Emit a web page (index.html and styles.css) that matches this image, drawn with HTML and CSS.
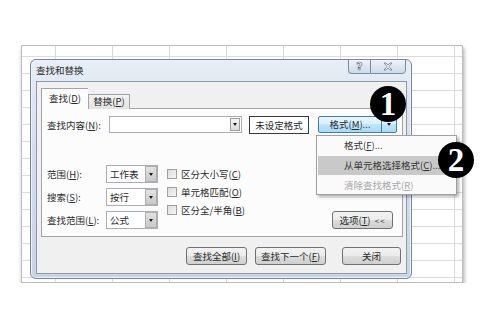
FILE: index.html
```html
<!DOCTYPE html>
<html lang="zh-CN">
<head>
    <meta charset="UTF-8">
    <title>查找和替换</title>
    <link rel="stylesheet" href="styles.css">
</head>
<body>
    <div class="sheet">
        <div class="dialog">
            <div class="titlebar">
                <span class="title">查找和替换</span>
                <div class="caption-btns">
                    <span class="cap help">?</span>
                    <span class="cap close">
                        <svg width="10" height="9" viewBox="0 0 10 9">
                            <path d="M1 1 L3 1 L5 3 L7 1 L9 1 L6 4.5 L9 8 L7 8 L5 6 L3 8 L1 8 L4 4.5 Z" fill="#f4f6f9" stroke="#6b7a8c" stroke-width="0.8"/>
                        </svg>
                    </span>
                </div>
            </div>
            <div class="client">
                <div class="tabs">
                    <span class="tab active">查找(<u>D</u>)</span>
                    <span class="tab">替换(<u>P</u>)</span>
                </div>
                <div class="panel">
                    <div class="find-row">
                        <span class="find-label">查找内容(<u>N</u>):</span>
                        <div class="combo"><span class="drop"></span></div>
                        <span class="btn-plain">未设定格式</span>
                        <div class="split">
                            <span class="split-main">格式(<u>M</u>)...</span>
                            <span class="split-arrow"></span>
                        </div>
                    </div>
                    <div class="options">
                        <div class="selects">
                            <div class="opt-row">
                                <span class="opt-label">范围(<u>H</u>):</span>
                                <div class="select">工作表<span class="drop grey"></span></div>
                            </div>
                            <div class="opt-row">
                                <span class="opt-label">搜索(<u>S</u>):</span>
                                <div class="select">按行<span class="drop grey"></span></div>
                            </div>
                            <div class="opt-row">
                                <span class="opt-label">查找范围(<u>L</u>):</span>
                                <div class="select">公式<span class="drop grey"></span></div>
                            </div>
                        </div>
                        <div class="checks">
                            <div class="check"><span class="box"></span>区分大小写(<u>C</u>)</div>
                            <div class="check"><span class="box"></span>单元格匹配(<u>O</u>)</div>
                            <div class="check"><span class="box"></span>区分全/半角(<u>B</u>)</div>
                        </div>
                        <span class="btn opt-btn">选项(<u>T</u>) <span class="chev">&lt;&lt;</span></span>
                    </div>
                </div>
                <div class="actions">
                    <span class="btn w-all">查找全部(<u>I</u>)</span>
                    <span class="btn w-next">查找下一个(<u>F</u>)</span>
                    <span class="btn w-close">关闭</span>
                </div>
            </div>
        </div>

        <div class="menu">
            <div class="menu-item">格式(<u>F</u>)...</div>
            <div class="menu-item hover">从单元格选择格式(<u>C</u>)...</div>
            <div class="menu-item disabled">清除查找格式(<u>R</u>)</div>
        </div>

        <div class="badge badge-1">1</div>
        <div class="badge badge-2">2</div>
    </div>
</body>
</html>
```

FILE: styles.css
```css
* {
    box-sizing: border-box;
}
body {
    margin: 0;
    background: #fff;
    font-family: "Noto Sans CJK SC", "Noto Sans", sans-serif;
    font-size: 9.5px;
    color: #2a2a2a;
}
u {
    text-decoration: underline;
    text-underline-offset: 1px;
}
.sheet {
    position: relative;
    margin: 45px 0 0 21px;
    width: 442px;
    height: 238px;
    border: 1px solid #bdbdbd;
    background-color: #fff;
    background-image:
        linear-gradient(to right, #d8d8d8 1px, transparent 1px),
        linear-gradient(to bottom, #dcdcdc 1px, transparent 1px);
    background-size: 57px 100%, 100% 17px;
    background-position: 33px 0, 0 10px;
    box-shadow: 1px 3px 4px rgba(0, 0, 0, 0.35);
}

/* dialog window */
.dialog {
    position: absolute;
    left: 8px;
    top: 13px;
    width: 382px;
    height: 220px;
    display: flex;
    flex-direction: column;
    border: 1px solid #74849a;
    border-radius: 6px;
    background: linear-gradient(180deg, #e6edf5 0%, #d3dfeb 40%, #c7d5e4 100%);
    box-shadow: inset 0 0 0 1px #eef3f8;
}
.titlebar {
    height: 21px;
    display: flex;
    justify-content: space-between;
    align-items: flex-start;
    padding-left: 5px;
}
.title {
    line-height: 20px;
}
.caption-btns {
    display: flex;
    margin-right: 5px;
    margin-top: -1px;
}
.cap {
    height: 15px;
    display: flex;
    align-items: center;
    justify-content: center;
    border: 1px solid #7c8ba0;
    background: linear-gradient(180deg, #eef3f8 0%, #dde6f0 50%, #cfdbe8 100%);
}
.help {
    width: 22px;
    border-radius: 0 0 0 4px;
    border-right: none;
    color: #fafcfd;
    font-family: "DejaVu Sans", sans-serif;
    font-weight: bold;
    font-size: 11px;
    -webkit-text-stroke: 0.7px #6b7a8c;
}
.close {
    width: 36px;
    border-radius: 0 0 4px 0;
}
.client {
    flex: 1;
    margin: 0 4px 4px 5px;
    border: 1px solid #8c9aad;
    background: #f0f0f0;
    display: flex;
    flex-direction: column;
}

/* tabs */
.tabs {
    display: flex;
    align-items: flex-end;
    padding: 6px 0 0 4px;
    height: 27px;
    margin-bottom: -1px;
    position: relative;
    z-index: 1;
}
.tab {
    width: 42px;
    height: 15px;
    line-height: 13px;
    text-align: center;
    border: 1px solid #a3a3a3;
    border-bottom: none;
    background: linear-gradient(180deg, #f3f3f3, #e2e2e2);
}
.tab.active {
    width: 47px;
    height: 21px;
    line-height: 19px;
    background: #fcfcfc;
    border-right: none;
}
.panel {
    height: 129px;
    margin: 0 3px 0 4px;
    border: 1px solid #a3a3a3;
    background: #fcfcfc;
    display: flex;
    flex-direction: column;
}
.find-row {
    display: flex;
    align-items: center;
    margin-top: 6px;
    padding-left: 5px;
    height: 19px;
}
.find-label {
    width: 62px;
}
.combo {
    width: 133px;
    height: 17px;
    border: 1px solid #abadb3;
    background: #fff;
    display: flex;
    justify-content: flex-end;
    padding: 1px;
}
.drop {
    width: 10px;
    border: 1px solid #9c9c9c;
    background: linear-gradient(180deg, #f4f4f4, #dcdcdc);
    display: flex;
    align-items: center;
    justify-content: center;
}
.drop::after {
    content: "";
    border-left: 2.5px solid transparent;
    border-right: 2.5px solid transparent;
    border-top: 3px solid #1a1a1a;
}
.drop.grey {
    width: 12px;
    border-color: #b0b0b0;
    background: linear-gradient(180deg, #e2e2e2, #c9c9c9);
}
.btn-plain {
    margin-left: 7px;
    width: 60px;
    height: 18px;
    line-height: 16px;
    text-align: center;
    border: 1px solid #3a3a3a;
    background: #fff;
}
.split {
    margin-left: 9px;
    width: 79px;
    height: 17px;
    display: flex;
    border: 1px solid #3c7fb1;
    border-radius: 2px;
    background: linear-gradient(180deg, #eaf6fd 0%, #d9f0fc 50%, #bee6fd 50%, #a7d9f5 100%);
}
.split-main {
    flex: 1;
    line-height: 15px;
    text-align: center;
    border-right: 1px solid #3c7fb1;
}
.split-arrow {
    width: 14px;
    display: flex;
    align-items: center;
    justify-content: center;
}
.split-arrow::after {
    content: "";
    border-left: 2.5px solid transparent;
    border-right: 2.5px solid transparent;
    border-top: 3px solid #1a1a1a;
}

/* search options */
.options {
    display: flex;
    margin-top: 31px;
    padding-right: 9px;
}
.selects {
    display: flex;
    flex-direction: column;
    gap: 5px;
    padding-left: 5px;
}
.opt-row {
    display: flex;
    align-items: center;
    height: 18px;
}
.opt-label {
    width: 59px;
}
.select {
    width: 52px;
    height: 18px;
    border: 1px solid #abadb3;
    background: #fff;
    display: flex;
    justify-content: space-between;
    align-items: stretch;
    padding-left: 3px;
    line-height: 16px;
}
.checks {
    margin-left: 9px;
    display: flex;
    flex-direction: column;
}
.check {
    height: 18px;
    display: flex;
    align-items: center;
}
.box {
    width: 10px;
    height: 10px;
    margin-right: 4px;
    border: 1px solid #a0a0a0;
    background: linear-gradient(135deg, #dcdcdc, #f6f6f6);
}
.btn {
    height: 18px;
    line-height: 16px;
    text-align: center;
    border: 1px solid #707070;
    border-radius: 3px;
    background: linear-gradient(180deg, #f2f2f2 0%, #ebebeb 50%, #dddddd 50%, #cfcfcf 100%);
}
.opt-btn {
    margin-left: auto;
    align-self: flex-end;
    width: 61px;
}
.chev {
    font-size: 8px;
    letter-spacing: 1px;
    margin-left: 2px;
}
.actions {
    display: flex;
    justify-content: flex-end;
    margin-top: 10px;
    padding-right: 5px;
}
.w-all {
    width: 61px;
}
.w-next {
    width: 71px;
    margin-left: 8px;
}
.w-close {
    width: 59px;
    margin-left: 16px;
}

/* drop-down menu of the format button */
.menu {
    position: absolute;
    left: 294px;
    top: 89px;
    width: 141px;
    height: 60px;
    border: 1px solid #a0a0a0;
    background: #fafafa;
    box-shadow: 2px 2px 3px rgba(0, 0, 0, 0.3);
    z-index: 2;
}
.menu-item {
    height: 19px;
    margin: 0 1px 1px;
    line-height: 19px;
    padding-left: 26px;
    color: #333;
}
.menu-item.hover {
    background: #c9c9c9;
}
.menu-item.disabled {
    color: #a6a6a6;
}

/* numbered callouts */
.badge {
    position: absolute;
    width: 36px;
    height: 36px;
    border-radius: 50%;
    background: #000;
    color: #fff;
    font-family: "Liberation Serif", serif;
    font-weight: bold;
    font-size: 33px;
    line-height: 37px;
    text-align: center;
    z-index: 3;
}
.badge-1 {
    left: 348px;
    top: 40px;
}
.badge-2 {
    left: 416px;
    top: 96px;
}
```
